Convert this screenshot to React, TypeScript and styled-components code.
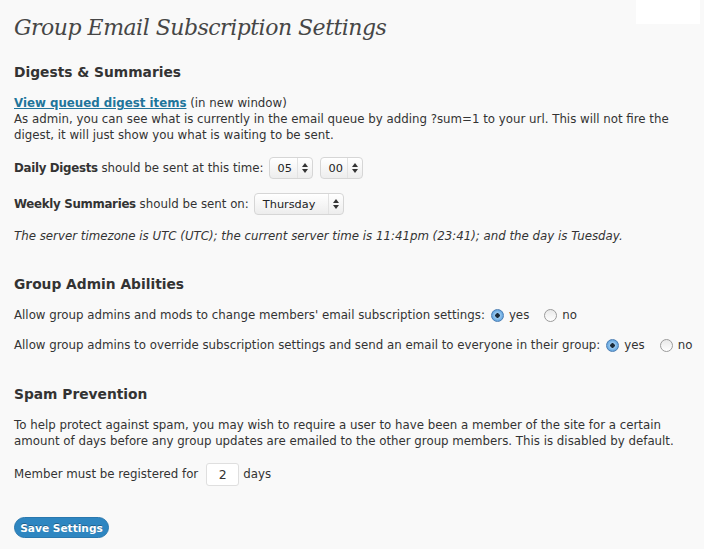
import styled, { createGlobalStyle } from 'styled-components';

const GlobalStyle = createGlobalStyle`
  html, body {
    margin: 0;
    padding: 0;
    background: #f9f9f9;
  }
  body {
    font-family: 'DejaVu Sans', Verdana, sans-serif;
    font-size: 11.8px;
    color: #333;
  }
`;

const Page = styled.div`
  position: relative;
  width: 704px;
  height: 549px;
  padding: 0 14px;
  box-sizing: border-box;
  overflow: hidden;
`;

const Corner = styled.div`
  position: absolute;
  top: 0;
  right: 4px;
  width: 64px;
  height: 24px;
  background: #fff;
`;

const Title = styled.h2`
  margin: 0;
  padding-top: 13px;
  height: 40px;
  font-family: 'DejaVu Serif', Georgia, serif;
  font-style: italic;
  font-weight: normal;
  font-size: 22px;
  letter-spacing: -0.5px;
  line-height: 30px;
  color: #464646;
`;

const Heading = styled.h3<{ $top: number }>`
  margin: ${p => p.$top}px 0 0;
  font-size: 13.8px;
  line-height: 20px;
  font-weight: bold;
  color: #333;
`;

const Para = styled.p<{ $top: number }>`
  margin: ${p => p.$top}px 0 0;
  line-height: 16px;
`;

const Row = styled.div<{ $top: number }>`
  display: flex;
  align-items: center;
  margin-top: ${p => p.$top}px;
  height: 24px;
  white-space: nowrap;
`;

const Strong = styled.b`
  letter-spacing: -0.3px;
`;

const Link = styled.a`
  color: #21759b;
  font-weight: bold;
  text-decoration: underline;
`;

const Select = styled.div<{ $w: number; $gap: number }>`
  display: inline-flex;
  align-items: center;
  box-sizing: border-box;
  width: ${p => p.$w}px;
  height: 22px;
  margin-left: ${p => p.$gap}px;
  border: 1px solid #d6d6d6;
  border-radius: 4px;
  background: linear-gradient(#fff, #ededed);
  box-shadow: inset 0 1px 0 #fff;
  font-size: 11.3px;
  color: #222;
`;

const SelectValue = styled.span`
  flex: 1;
  padding-left: 8px;
`;

const SelectArrow = styled.span`
  display: flex;
  align-items: center;
  justify-content: center;
  width: 14px;
  height: 100%;
  border-left: 1px solid #e2e2e2;
`;

const Italic = styled.p`
  margin: 12px 0 0;
  font-style: italic;
  line-height: 16px;
`;

const Radio = styled.span<{ $on?: boolean }>`
  display: inline-block;
  box-sizing: border-box;
  width: 13px;
  height: 13px;
  margin: 0 5px 0 6px;
  border-radius: 50%;
  border: 1px solid ${p => (p.$on ? '#4c7fb4' : '#9b9b9b')};
  background: ${p =>
    p.$on
      ? 'radial-gradient(circle, #1b2b3a 0 2px, #9ccaf0 2.5px, #5b9fdc 6px)'
      : 'linear-gradient(#e9e9e9, #fff)'};
  flex-shrink: 0;
`;

const Choice = styled.span<{ $gap?: number }>`
  display: inline-flex;
  align-items: center;
  margin-right: ${p => p.$gap ?? 0}px;
`;

const NumberBox = styled.span`
  display: inline-flex;
  align-items: center;
  justify-content: center;
  box-sizing: border-box;
  width: 33px;
  height: 23px;
  margin: 0 4px 0 8px;
  border: 1px solid #dfdfdf;
  border-radius: 3px;
  background: #fff;
  font-size: 12.5px;
`;

const Button = styled.button`
  margin-top: 31px;
  width: 95px;
  height: 21px;
  padding: 0;
  border: 1px solid #2a78ae;
  border-radius: 11px;
  background: #2e86c1;
  color: #fff;
  font-family: 'DejaVu Sans', Verdana, sans-serif;
  font-size: 10.6px;
  font-weight: bold;
  text-shadow: 0 -1px 0 rgba(0, 0, 0, 0.3);
`;

const Arrow = () => (
  <svg width="6" height="10" viewBox="0 0 6 10">
    <path d="M3 0L6 4H0z M3 10L0 6h6z" fill="#333" />
  </svg>
);

const Dropdown = ({ value, width, gap }: { value: string; width: number; gap: number }) => (
  <Select $w={width} $gap={gap}>
    <SelectValue>{value}</SelectValue>
    <SelectArrow>
      <Arrow />
    </SelectArrow>
  </Select>
);

const YesNo = () => (
  <>
    <Choice $gap={9}>
      <Radio $on />
      yes
    </Choice>
    <Choice>
      <Radio />
      no
    </Choice>
  </>
);

export default function App() {
  return (
    <>
      <GlobalStyle />
      <Page>
        <Corner />
        <Title>Group Email Subscription Settings</Title>

        <Heading $top={9}>Digests &amp; Summaries</Heading>
        <Para $top={13}>
          <Link href="#">View queued digest items</Link> (in new window)
          <br />
          As admin, you can see what is currently in the email queue by adding ?sum=1 to your url. This will not fire
          the digest, it will just show you what is waiting to be sent.
        </Para>
        <Row $top={13}>
          <Strong>Daily Digests</Strong>&nbsp;should be sent at this time:
          <Dropdown value="05" width={44} gap={5} />
          <Dropdown value="00" width={43} gap={7} />
        </Row>
        <Row $top={12}>
          <Strong>Weekly Summaries</Strong>&nbsp;should be sent on:
          <Dropdown value="Thursday" width={90} gap={5} />
        </Row>
        <Italic>The server timezone is UTC (UTC); the current server time is 11:41pm (23:41); and the day is Tuesday.</Italic>

        <Heading $top={30}>Group Admin Abilities</Heading>
        <Row $top={9}>
          Allow group admins and mods to change members' email subscription settings:
          <YesNo />
        </Row>
        <Row $top={6}>
          Allow group admins to override subscription settings and send an email to everyone in their group:
          <YesNo />
        </Row>

        <Heading $top={27}>Spam Prevention</Heading>
        <Para $top={13}>
          To help protect against spam, you may wish to require a user to have been a member of the site for a certain
          amount of days before any group updates are emailed to the other group members. This is disabled by default.
        </Para>
        <Row $top={13}>
          Member must be registered for
          <NumberBox>2</NumberBox>
          days
        </Row>

        <Button>Save Settings</Button>
      </Page>
    </>
  );
}
